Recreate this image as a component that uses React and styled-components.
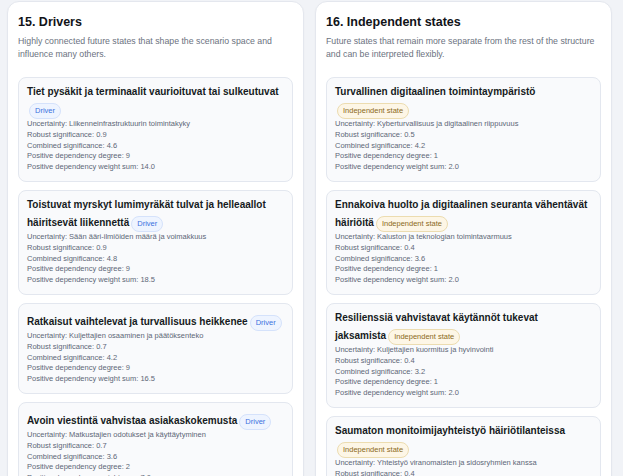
import React from "react";
import styled, { createGlobalStyle } from "styled-components";

const GlobalStyle = createGlobalStyle`
  html, body {
    margin: 0;
    padding: 0;
    background: #f1f3f7;
    font-family: "Liberation Sans", Arial, sans-serif;
  }
`;

const Page = styled.div`
  display: grid;
  grid-template-columns: 297px 297px;
  column-gap: 11px;
  padding: 1px 11px 0 7px;
  height: 476px;
  overflow: hidden;
  box-sizing: border-box;
`;

const Panel = styled.section`
  background: #ffffff;
  border: 1px solid #e4e7ee;
  border-radius: 12px;
  padding: 12.5px 10px;
  box-shadow: 0 1px 2px rgba(16, 24, 40, 0.04);
`;

const Heading = styled.h2`
  margin: 0 0 5px;
  font-size: 12.5px;
  line-height: 15.6px;
  font-weight: 700;
  color: #111318;
`;

const Intro = styled.p`
  margin: 0 0 17.4px;
  font-size: 8.75px;
  line-height: 12.4px;
  color: #6b7280;
`;

const CardList = styled.div`
  display: flex;
  flex-direction: column;
  gap: 8.5px;
`;

const Card = styled.article`
  background: #f9fafc;
  border: 1px solid #e3e7ef;
  border-radius: 8px;
  padding: 7px 10px 8px 8px;
`;

const Title = styled.h3`
  margin: 0;
  font-size: 10px;
  line-height: 14px;
  font-weight: 700;
  color: #161a22;
`;

const Badge = styled.span`
  display: inline-block;
  margin: 4px 0 0 2px;
  padding: 2px 5px;
  border-radius: 999px;
  font-size: 7.5px;
  line-height: 10px;
  font-weight: 400;
  border: 1px solid ${(p) => (p.$kind === "driver" ? "#d5e2fb" : "#ecdcb0")};
  background: ${(p) => (p.$kind === "driver" ? "#eef4ff" : "#fdf6e6")};
  color: ${(p) => (p.$kind === "driver" ? "#3a72de" : "#8c6a22")};
`;

const Meta = styled.div`
  font-size: 7.5px;
  line-height: 10.7px;
  color: #5d6777;
`;

const drivers = [
  {
    title: "Tiet pysäkit ja terminaalit vaurioituvat tai sulkeutuvat",
    uncertainty: "Liikenneinfrastruktuurin toimintakyky",
    robust: "0.9",
    combined: "4.6",
    degree: 9,
    weight: "14.0",
  },
  {
    title: "Toistuvat myrskyt lumimyräkät tulvat ja helleaallot häiritsevät liikennettä",
    uncertainty: "Sään ääri-ilmiöiden määrä ja voimakkuus",
    robust: "0.9",
    combined: "4.8",
    degree: 9,
    weight: "18.5",
  },
  {
    title: "Ratkaisut vaihtelevat ja turvallisuus heikkenee",
    uncertainty: "Kuljettajien osaaminen ja päätöksenteko",
    robust: "0.7",
    combined: "4.2",
    degree: 9,
    weight: "16.5",
  },
  {
    title: "Avoin viestintä vahvistaa asiakaskokemusta",
    uncertainty: "Matkustajien odotukset ja käyttäytyminen",
    robust: "0.7",
    combined: "3.6",
    degree: 2,
    weight: "7.0",
  },
];

const independents = [
  {
    title: "Turvallinen digitaalinen toimintaympäristö",
    uncertainty: "Kyberturvallisuus ja digitaalinen riippuvuus",
    robust: "0.5",
    combined: "4.2",
    degree: 1,
    weight: "2.0",
  },
  {
    title: "Ennakoiva huolto ja digitaalinen seuranta vähentävät häiriöitä",
    uncertainty: "Kaluston ja teknologian toimintavarmuus",
    robust: "0.4",
    combined: "3.6",
    degree: 1,
    weight: "2.0",
  },
  {
    title: "Resilienssiä vahvistavat käytännöt tukevat jaksamista",
    uncertainty: "Kuljettajien kuormitus ja hyvinvointi",
    robust: "0.4",
    combined: "3.2",
    degree: 1,
    weight: "2.0",
  },
  {
    title: "Saumaton monitoimijayhteistyö häiriötilanteissa",
    uncertainty: "Yhteistyö viranomaisten ja sidosryhmien kanssa",
    robust: "0.4",
    combined: "3.2",
    degree: 1,
    weight: "2.0",
  },
];

function StateCard({ item, kind }) {
  return (
    <Card>
      <Title>
        {item.title}
        <Badge $kind={kind}>{kind === "driver" ? "Driver" : "Independent state"}</Badge>
      </Title>
      <Meta>Uncertainty: {item.uncertainty}</Meta>
      <Meta>Robust significance: {item.robust}</Meta>
      <Meta>Combined significance: {item.combined}</Meta>
      <Meta>Positive dependency degree: {item.degree}</Meta>
      <Meta>Positive dependency weight sum: {item.weight}</Meta>
    </Card>
  );
}

export default function App() {
  return (
    <>
      <GlobalStyle />
      <Page>
        <Panel>
          <Heading>15. Drivers</Heading>
          <Intro>
            Highly connected future states that shape the scenario space and influence many others.
          </Intro>
          <CardList>
            {drivers.map((d) => (
              <StateCard key={d.title} item={d} kind="driver" />
            ))}
          </CardList>
        </Panel>
        <Panel>
          <Heading>16. Independent states</Heading>
          <Intro>
            Future states that remain more separate from the rest of the structure and can be
            interpreted flexibly.
          </Intro>
          <CardList>
            {independents.map((d) => (
              <StateCard key={d.title} item={d} kind="independent" />
            ))}
          </CardList>
        </Panel>
      </Page>
    </>
  );
}
